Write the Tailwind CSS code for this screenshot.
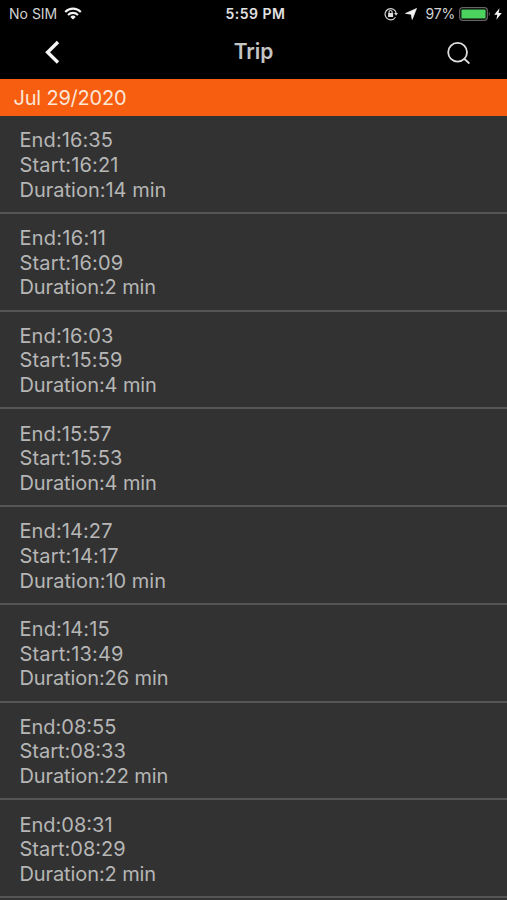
<!DOCTYPE html>
<html lang="en">
<head>
<meta charset="utf-8">
<title>Trip</title>
<script src="https://cdn.jsdelivr.net/npm/@tailwindcss/browser@4"></script>
</head>
<body class="bg-[#323232] font-['Inter',sans-serif]">
<div class="flex h-[900px] w-[507px] flex-col overflow-hidden bg-[#323232]">
  <header class="shrink-0 bg-black">
    <div class="grid h-7 grid-cols-3 items-center pr-[5px] pl-[9px] text-[#d2d2d2]">
      <div class="flex items-center gap-[7px]">
        <span class="text-[14px] leading-7 whitespace-nowrap">No SIM</span>
        <svg class="-mt-0.5 h-[13px] w-[18px]" viewBox="0 0 18 13" fill="none" stroke="#f4f4f4" stroke-width="2.1">
          <path d="M1.2 4.9a11 11 0 0 1 15.6 0M4 7.9a7.2 7.2 0 0 1 10 0"/>
          <path d="M9 12.6 6.3 9.9a3.9 3.9 0 0 1 5.4 0Z" fill="#f4f4f4" stroke="none"/>
        </svg>
      </div>
      <span class="text-center text-[14px] leading-7 font-semibold tracking-[0.5px] whitespace-nowrap text-[#e2e2e2]">5:59 PM</span>
      <div class="flex items-center justify-end">
        <svg class="mr-[7px] -mt-px h-[14px] w-[14px] shrink-0" viewBox="0 0 14 14" fill="none" stroke="#d0d0d0" stroke-width="1.2">
          <path d="M11.4 10.2A5.6 5.6 0 1 1 12.2 6.3"/>
          <path d="M10 6h4l-2 2.8Z" fill="#d0d0d0" stroke="none"/>
          <rect x="4.1" y="6.1" width="5" height="4" rx=".5" fill="#e0e0e0" stroke="none"/>
          <path d="M5.1 6.4V5a1.5 1.5 0 0 1 3 0v1.4"/>
        </svg>
        <svg class="mr-[9px] -mt-px h-3 w-3 shrink-0" viewBox="0 0 12 12" fill="#f4f4f4" stroke="#f4f4f4" stroke-width=".7" stroke-linejoin="round"><path d="M11.5.5 7.2 11.4 6.2 6.2.5 5.4Z"/></svg>
        <span class="mr-[4px] text-[14px] leading-7 tracking-[-0.2px]">97%</span>
        <svg class="mr-[3px] -mt-px h-[14px] w-[32px] shrink-0" viewBox="0 0 32 14">
          <rect x=".7" y=".7" width="27.6" height="12.6" rx="3" fill="none" stroke="#646464" stroke-width="1.3"/>
          <rect x="2.4" y="2.4" width="24.2" height="9.2" rx="1.2" fill="#4cd35f"/>
          <path d="M29.8 4.6q2 2.4 0 4.8Z" fill="#646464"/>
        </svg>
        <svg class="-mt-px h-3 w-2 shrink-0" viewBox="0 0 8 12" fill="#f4f4f4"><path d="M5.5.2.2 6.7h3.1L2.4 11.8 7.8 5H4.6Z"/></svg>
      </div>
    </div>
    <div class="grid h-[51px] grid-cols-3 items-center">
      <svg class="ml-[44px] -mt-1 h-[24px] w-[16px]" viewBox="0 0 16 24" fill="none" stroke="#f5f5f5" stroke-width="3.4"><path d="M14 2 3.6 12.2 14 22.5"/></svg>
      <h1 class="-mt-1 text-center text-[21px] leading-7 font-semibold tracking-[-0.1px] text-[#c4c4c4]">Trip</h1>
      <svg class="mr-[36px] -mt-0.5 h-6 w-6 justify-self-end" viewBox="0 0 24 24" fill="none" stroke="#dedede" stroke-width="1.8" stroke-linecap="round"><circle cx="10.6" cy="11.2" r="9.4"/><path d="m17.4 18 4.5 4"/></svg>
    </div>
  </header>
  <h2 class="h-[37px] shrink-0 bg-[#f75e10] pl-[13.5px] text-[20px] leading-[38px] tracking-[-0.2px] text-[#fbe6d8]">Jul 29/2020</h2>
  <ul class="text-[20px] leading-[24.6px] text-[#b6b6b6]">
    <li class="h-[97.75px] border-b-2 border-[#555] pt-[12.4px] pl-[19.5px]"><p class="tracking-[0.1px]">End:16:35</p><p class="tracking-[0.15px]">Start:16:21</p><p>Duration:14 min</p></li>
    <li class="h-[97.75px] border-b-2 border-[#555] pt-[12.4px] pl-[19.5px]"><p class="tracking-[0.25px]">End:16:11</p><p class="tracking-[0.15px]">Start:16:09</p><p class="tracking-[-0.1px]">Duration:2 min</p></li>
    <li class="h-[97.75px] border-b-2 border-[#555] pt-[12.4px] pl-[19.5px]"><p class="tracking-[0.1px]">End:16:03</p><p class="tracking-[0.15px]">Start:15:59</p><p class="tracking-[-0.1px]">Duration:4 min</p></li>
    <li class="h-[97.75px] border-b-2 border-[#555] pt-[12.4px] pl-[19.5px]"><p class="tracking-[0.1px]">End:15:57</p><p class="tracking-[0.15px]">Start:15:53</p><p class="tracking-[-0.1px]">Duration:4 min</p></li>
    <li class="h-[97.75px] border-b-2 border-[#555] pt-[12.4px] pl-[19.5px]"><p class="tracking-[0.1px]">End:14:27</p><p class="tracking-[0.2px]">Start:14:17</p><p>Duration:10 min</p></li>
    <li class="h-[97.75px] border-b-2 border-[#555] pt-[12.4px] pl-[19.5px]"><p class="tracking-[0.15px]">End:14:15</p><p class="tracking-[0.15px]">Start:13:49</p><p class="tracking-[-0.1px]">Duration:26 min</p></li>
    <li class="h-[97.75px] border-b-2 border-[#555] pt-[12.4px] pl-[19.5px]"><p>End:08:55</p><p>Start:08:33</p><p class="tracking-[-0.1px]">Duration:22 min</p></li>
    <li class="h-[97.75px] border-b-2 border-[#555] pt-[12.4px] pl-[19.5px]"><p>End:08:31</p><p>Start:08:29</p><p class="tracking-[-0.1px]">Duration:2 min</p></li>
  </ul>
</div>
</body>
</html>
